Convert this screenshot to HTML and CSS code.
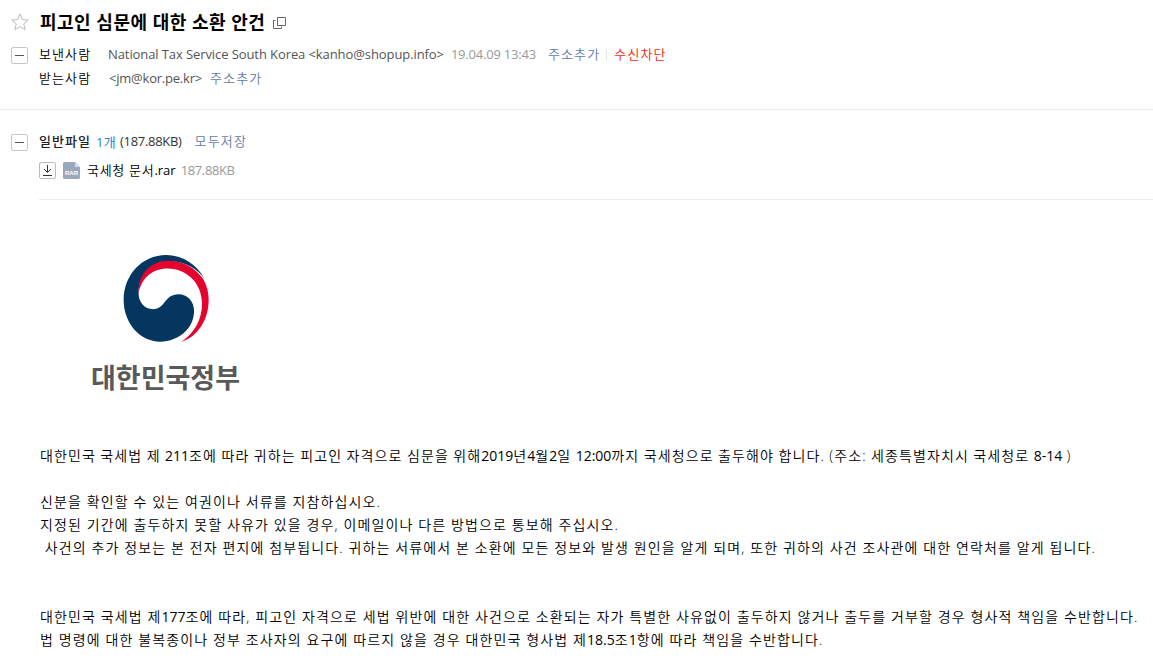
FILE: index.html
```html
<!DOCTYPE html>
<html lang="ko">
<head>
  <meta charset="UTF-8" />
  <title>피고인 심문에 대한 소환 안건</title>
  <link rel="stylesheet" href="styles.css">
</head>
<body>
  <header class="mail-header">
    <div class="row subject-row">
      <svg class="star" viewBox="0 0 18 18"><path d="M9 1l2.300 5.600 5.900.4-4.500 3.900 1.500 5.900L9 13.600l-5.200 3.200 1.500-5.900L.8 7l5.900-.4z"/></svg>
      <h1 class="subject">피고인 심문에 대한 소환 안건</h1>
      <svg class="popup" viewBox="0 0 13 12"><path d="M4.500.5h8v8h-8zM2.500 3.500h-2v8h8v-2"/></svg>
    </div>
    <div class="row from-row">
      <button class="toggle"></button>
      <span class="label">보낸사람</span>
      <span class="address">National Tax Service South Korea &lt;kanho@shopup.info&gt;</span>
      <span class="date">19.04.09 13:43</span>
      <a class="link">주소추가</a>
      <span class="bar"></span>
      <a class="link block">수신차단</a>
    </div>
    <div class="row to-row">
      <span class="label">받는사람</span>
      <span class="address">&lt;jm@kor.pe.kr&gt;</span>
      <a class="link">주소추가</a>
    </div>
  </header>

  <section class="files">
    <div class="row files-head">
      <button class="toggle"></button>
      <strong class="files-title">일반파일</strong>
      <span class="count">1개</span>
      <span class="total">(187.88KB)</span>
      <a class="link">모두저장</a>
    </div>
    <div class="row file">
      <button class="download"><svg viewBox="0 0 17 17"><path d="M8.500 3v7M5 7l3.500 3.500L12 7M4 13.500h9"/></svg></button>
      <span class="rar"><svg viewBox="0 0 17 17"><path class="sheet" d="M1 0h11l5 5v11l-1 1H1l-1-1V1z"/><path class="fold" d="M12 0l5 5h-5z"/></svg><b>RAR</b></span>
      <span class="file-name">국세청 문서<span class="ext">.rar</span></span>
      <span class="file-size">187.88KB</span>
    </div>
  </section>

  <main class="content">
    <div class="logo">
      <svg class="emblem" viewBox="125 38 265 272">
        <path class="blue" d="M374 116A131 131 0 0 0 258 43C186 43 130 103 130 178C130 250 180 304 240 304C298 304 342 262 342 212C342 182 322 161 295 161C252 161 256 206 219 206C192 206 175 184 175 158C175 100 215 62 268 62C318 62 356 88 374 116Z"/>
        <path class="red" d="M175 158C172 100 212 60 264 60C312 60 348 84 370 116C381 136 386 156 386 178C386 240 352 290 303 305C345 278 366 234 366 190C366 130 322 84 262 84C218 84 184 112 175 158Z"/>
      </svg>
      <span class="wordmark">대한민국정부</span>
    </div>
    <p class="summons">대한민국 국세법 제 <span class="num">211</span>조에 따라 귀하는 피고인 자격으로 심문을 위해<span class="num">2019</span>년<span class="num">4</span>월<span class="num">2</span>일 <span class="num">12:00</span>까지 국세청으로 출두해야 합니다. (주소: 세종특별자치시 국세청로 <span class="num">8-14</span> )</p>
    <p>신분을 확인할 수 있는 여권이나 서류를 지참하십시오.<br>
    지정된 기간에 출두하지 못할 사유가 있을 경우, 이메일이나 다른 방법으로 통보해 주십시오.<br>
    &nbsp;사건의 추가 정보는 본 전자 편지에 첨부됩니다. 귀하는 서류에서 본 소환에 모든 정보와 발생 원인을 알게 되며, 또한 귀하의 사건 조사관에 대한 연락처를 알게 됩니다.</p>
    <p class="last">대한민국 국세법 제<span class="num">177</span>조에 따라, 피고인 자격으로 세법 위반에 대한 사건으로 소환되는 자가 특별한 사유없이 출두하지 않거나 출두를 거부할 경우 형사적 책임을 수반합니다.<br>
    법 명령에 대한 불복종이나 정부 조사자의 요구에 따르지 않을 경우 대한민국 형사법 제<span class="num">18.5</span>조<span class="num">1</span>항에 따라 책임을 수반합니다.</p>
  </main>
</body>
</html>
```
FILE: styles.css
```css
* { box-sizing: border-box; }

body {
  margin: 0;
  height: 661px;
  overflow: hidden;
  background: #fff;
  color: #000;
  font-family: "Open Sans", "Noto Sans CJK KR", sans-serif;
  font-size: 13px;
}

svg {
  display: block;
  fill: none;
  stroke: #666;
}

.row {
  display: flex;
  align-items: center;
  height: 24px;
  white-space: nowrap;
}

.row > span,
.row > a,
.row > strong { flex-shrink: 0; }

.mail-header {
  height: 110px;
  padding: 7px 0 0 11px;
  border-bottom: 1px solid #ebebeb;
}

.subject-row { height: 30px; margin-bottom: 5px; }
.star { width: 18px; height: 18px; stroke: #bbb; }

.subject {
  margin: -2px 8px 0 11px;
  font-size: 18px;
  font-weight: 700;
  letter-spacing: 0.5px;
}

.popup { width: 13px; height: 12px; margin-top: 2px; }

.toggle {
  width: 17px;
  height: 17px;
  margin: 3px 11px 0 0;
  padding: 0;
  border: 1px solid #c8c8c8;
  border-radius: 2px;
  background: #fff;
}

.toggle::before {
  content: "";
  display: block;
  width: 9px;
  height: 1px;
  margin: 0 auto;
  background: #555;
}

.label {
  width: 52px;
  margin: -1px 17px 0 0;
  font-weight: 350;
  letter-spacing: 1.1px;
}

.to-row { padding-left: 28px; }
.address { margin-right: 8px; color: #555; letter-spacing: -0.09px; }
.to-row .address { margin-left: 1px; letter-spacing: -0.22px; }
.date { margin: 0 12px 0 -1px; color: #999; letter-spacing: -0.21px; }

.link {
  margin-top: -1px;
  color: #637ba5;
  font-weight: 350;
  letter-spacing: 1.14px;
}

.bar { width: 1px; height: 11px; margin: 0 7px 0 6px; background: #e2e2e2; }
.block { color: #f21d0d; }

.files {
  height: 90px;
  margin-left: 39px;
  padding-top: 19px;
  border-bottom: 1px solid #ebebeb;
}

.files-head { margin-left: -28px; }

.files-title {
  width: 52px;
  margin: -1px 5px 0 0;
  color: #222;
  font-weight: 500;
  letter-spacing: 1.04px;
}

.count { margin-right: 4px; color: #2a82d0; letter-spacing: 0.3px; }
.total { margin-right: 13px; color: #333; letter-spacing: -0.3px; }
.file { height: 34px; }

.download {
  width: 17px;
  height: 17px;
  margin: 1px 7px 0 0;
  padding: 0;
  border: 1px solid #bbb;
  border-radius: 2px;
  background: #fff;
}

.download svg { width: 17px; height: 17px; margin: -1px; stroke: #333; }
.rar { position: relative; width: 17px; height: 17px; margin: 1px 7px 0 0; }
.rar .sheet { fill: #9ba7bb; stroke: none; }
.rar .fold { fill: #d5dbe5; stroke: none; }

.rar b {
  position: absolute;
  left: 2px;
  top: 7px;
  color: #fff;
  font: 700 6px/8px "Liberation Sans", sans-serif;
}

.file-name { margin: -1px 5px 0 0; font-weight: 350; letter-spacing: 0.7px; }
.ext { font-weight: 400; letter-spacing: 0; }
.file-size { color: #999; letter-spacing: -0.37px; }

.content {
  padding: 53px 0 0 40px;
  font-size: 14px;
  font-weight: 350;
  line-height: 23px;
  letter-spacing: 1.12px;
  white-space: nowrap;
}

.content p { margin: 0 0 23px; }
.content .summons { word-spacing: -0.4px; }
.content .last { margin-top: 46px; }
.num { font-weight: 400; letter-spacing: 0; }

.logo { width: 252px; height: 191px; }
.emblem { width: 88px; height: 91px; margin-left: 82px; stroke: none; }
.blue { fill: #04365f; }
.red { fill: #e4032e; }

.wordmark {
  display: inline-block;
  margin: 13px 0 0 51px;
  color: #595959;
  font: 700 27px/40px "Noto Sans CJK KR", sans-serif;
  letter-spacing: 0;
}
```
